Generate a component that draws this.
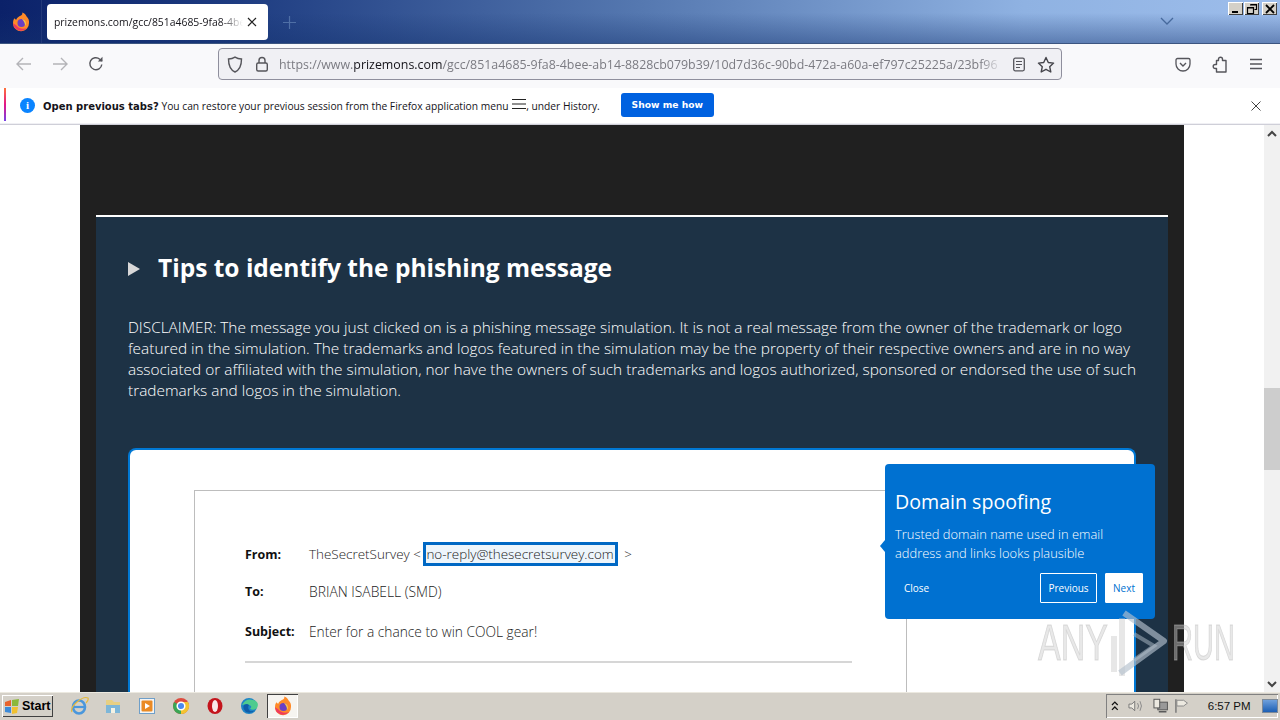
<div class="screen">
  <header class="tabbar">
    <div class="fx-btn">
      <svg width="20" height="20" viewBox="0 0 20 20"><path d="M10 3.500c1-.5 1.500-1.500 1.300-3 2.500 1 3.700 2.500 4.300 4 2 2 2.700 4 2.400 6.500a8 8 0 0 1-16 .5C2 9 2.500 7.500 3.500 6.300 4 7 4.500 7.500 5.200 7.700 6 5.700 7.700 4.300 10 3.500z" fill="#ff8a28"/><path d="M2 11a8 8 0 0 0 14 5c-3 1.500-8 1-10.500-2.500C4 12.500 3 12 2 11z" fill="#ef3a5d"/><circle cx="10.500" cy="11" r="4" fill="#6a3fc4"/><path d="M11 7c2.500.5 4 2 4 4.500 0 1-.5 2-1.200 2.600.6-2.600-.8-4.800-2.800-7.100z" fill="#ffc940"/></svg>
    </div>
    <div class="tab">
      <span class="tab-title">prizemons.com/gcc/851a4685-9fa8-4bee-ab14</span>
      <svg class="tab-x" width="10" height="10" viewBox="0 0 10 10"><path d="M1 1l8 8M9 1l-8 8" stroke="#222" stroke-width="1.200"/></svg>
    </div>
    <svg class="newtab" width="13" height="13" viewBox="0 0 13 13"><path d="M6.500 0v13M0 6.500h13" stroke="#4f6fa6" stroke-width="1.200"/></svg>
    <div class="spacer"></div>
    <svg class="chev" width="14" height="8" viewBox="0 0 14 8"><path d="M1 1l6 6 6-6" fill="none" stroke="#46699c" stroke-width="1.300"/></svg>
    <div class="winbtns">
      <span class="winbtn"><svg width="12" height="12" viewBox="0 0 12 12"><rect x="2" y="8" width="6" height="2" fill="#000"/></svg></span>
      <span class="winbtn wb-mid"><svg width="12" height="12" viewBox="0 0 12 12"><path d="M4.500 1.500h6v5h-2M1.500 4.500h6v6h-6z" fill="none" stroke="#000" stroke-width="1.200"/><path d="M4 2h7M1 5h7" stroke="#000" stroke-width="1.200"/></svg></span>
      <span class="winbtn"><svg width="12" height="12" viewBox="0 0 12 12"><path d="M2 2l8 8M10 2l-8 8" stroke="#000" stroke-width="1.800"/></svg></span>
    </div>
  </header>

  <nav class="navbar">
    <svg class="nav-ic first" width="18" height="16" viewBox="0 0 18 16"><path d="M16 8H2M8 2L2 8l6 6" fill="none" stroke="#b4b4b8" stroke-width="1.400"/></svg>
    <svg class="nav-ic" width="18" height="16" viewBox="0 0 18 16"><path d="M2 8h14M10 2l6 6-6 6" fill="none" stroke="#b4b4b8" stroke-width="1.400"/></svg>
    <svg class="nav-ic" width="18" height="18" viewBox="0 0 18 18"><path d="M14.800 9.500A6 6 0 1 1 12.800 4.200L15 6" fill="none" stroke="#55555b" stroke-width="1.400"/><path d="M15.500 1.800V6.500H10.800z" fill="#55555b"/></svg>
    <div class="urlbar">
      <svg width="16" height="17" viewBox="0 0 16 17"><path d="M8 1.200C6 2.500 4 3 1.500 3c0 6 1 10.500 6.500 13 5.500-2.500 6.500-7 6.500-13C12 3 10 2.500 8 1.200z" fill="none" stroke="#55555b" stroke-width="1.400"/></svg>
      <svg class="lock" width="14" height="16" viewBox="0 0 14 16"><rect x="1.700" y="7" width="10.600" height="8" rx="1.500" fill="none" stroke="#55555b" stroke-width="1.400"/><path d="M4 7V4.500a3 3 0 0 1 6 0V7" fill="none" stroke="#55555b" stroke-width="1.400"/></svg>
      <div class="url"><span class="dim">https://www.</span><span class="dark">prizemons.com</span><span class="dim">/gcc/851a4685-9fa8-4bee-ab14-8828cb079b39/10d7d36c-90bd-472a-a60a-ef797c25225a/23bf96</span></div>
      <svg class="reader" width="14" height="15" viewBox="0 0 14 15"><rect x="1.700" y="1.200" width="10.600" height="12.600" rx="1.500" fill="none" stroke="#55555b" stroke-width="1.300"/><path d="M4 4.500h6M4 7.500h6M4 10.500h4" stroke="#55555b" stroke-width="1.200"/></svg>
      <svg class="star" width="18" height="17" viewBox="0 0 18 17"><path d="M9 1.500l2.300 5 5.300.6-3.900 3.600 1.100 5.300L9 13.300 4.200 16l1.100-5.300L1.400 7.100l5.300-.6z" fill="none" stroke="#45454b" stroke-width="1.400" stroke-linejoin="round"/></svg>
    </div>
    <div class="nav-right">
      <svg width="16" height="15" viewBox="0 0 16 15"><path d="M2.500 1.500h11a1.500 1.500 0 0 1 1.500 1.500v4a7 7 0 0 1-14 0V3a1.500 1.500 0 0 1 1.500-1.500z" fill="none" stroke="#55555b" stroke-width="1.300"/><path d="M5 6l3 3 3-3" fill="none" stroke="#55555b" stroke-width="1.400"/></svg>
      <svg width="16" height="17" viewBox="0 0 16 17"><path d="M6.500 4.500V3.200a2 2 0 0 1 4 0V4.500h3.500v11.500H4.500v-3.500H3.200a2 2 0 0 1 0-4H4.500V4.500z" fill="none" stroke="#55555b" stroke-width="1.400" stroke-linejoin="round"/></svg>
      <svg width="14" height="12" viewBox="0 0 14 12"><path d="M1 1.500h12M1 6h12M1 10.500h12" stroke="#55555b" stroke-width="1.300"/></svg>
    </div>
  </nav>

  <aside class="infobar">
    <span class="stripe"></span>
    <span class="info-dot">i</span>
    <p class="info-text"><b>Open previous tabs?</b> You can restore your previous session from the Firefox application menu <svg class="menu-ic" width="14" height="12" viewBox="0 0 14 12"><path d="M0 1.500h14M0 6h14M0 10.500h14" stroke="#222" stroke-width="1.200"/></svg>, under History.</p>
    <button class="show">Show me how</button>
    <div class="spacer"></div>
    <svg class="info-x" width="10" height="10" viewBox="0 0 10 10"><path d="M.5.5l9 9M9.500.5l-9 9" stroke="#444" stroke-width="1"/></svg>
  </aside>

  <main class="viewport">
    <div class="page">
      <div class="dark-wrap">
        <section class="panel">
          <h1 class="tips"><span class="tri"></span>Tips to identify the phishing message</h1>
          <p class="disclaimer">DISCLAIMER: The message you just clicked on is a phishing message simulation. It is not a real message from the owner of the trademark or logo featured in the simulation. The trademarks and logos featured in the simulation may be the property of their respective owners and are in no way associated or affiliated with the simulation, nor have the owners of such trademarks and logos authorized, sponsored or endorsed the use of such trademarks and logos in the simulation.</p>
          <div class="card">
            <div class="mail">
              <div class="row r-from"><b>From:</b><span>TheSecretSurvey &lt; <em class="hl">no-reply@thesecretsurvey.com</em> &gt;</span></div>
              <div class="row r-to"><b>To:</b><span>BRIAN ISABELL (SMD)</span></div>
              <div class="row r-sub"><b>Subject:</b><span>Enter for a chance to win COOL gear!</span></div>
              <hr />
            </div>
            <div class="tip">
              <span class="tip-arrow"></span>
              <h2>Domain spoofing</h2>
              <p>Trusted domain name used in email address and links looks plausible</p>
              <div class="tip-actions">
                <span class="tip-close">Close</span>
                <div class="spacer"></div>
                <span class="tip-btn prev">Previous</span>
                <span class="tip-btn solid">Next</span>
              </div>
            </div>
          </div>
        </section>
      </div>
    </div>
    <div class="scrollbar">
      <span class="sb-arrow"><svg width="10" height="7" viewBox="0 0 10 7"><path d="M1 6l4-4 4 4" fill="none" stroke="#444" stroke-width="2"/></svg></span>
      <span class="thumb"></span>
      <span class="sb-arrow bottom"><svg width="10" height="7" viewBox="0 0 10 7"><path d="M1 1l4 4 4-4" fill="none" stroke="#444" stroke-width="2"/></svg></span>
    </div>
    <div class="watermark">
      <span class="wm-text any">ANY</span>
      <svg class="wm-logo" width="60" height="66" viewBox="0 0 60 66"><path d="M4 26V62M12 8V66" stroke="#c4c4c4" stroke-width="6" opacity=".4"/><path d="M14 3L54 31 10 63" fill="none" stroke="#b4c0cc" stroke-width="6" opacity=".65" stroke-linejoin="round"/><path d="M24 24L44 36 24 50" fill="none" stroke="#b4c0cc" stroke-width="4" opacity=".5"/></svg>
      <span class="wm-text run">RUN</span>
    </div>
  </main>

  <footer class="taskbar">
    <div class="start">
      <svg width="16" height="15" viewBox="0 0 16 15"><path d="M1 3l6-2v6H1z" fill="#e8632c"/><path d="M8 1l7-1-1 7H8z" fill="#8bb83a"/><path d="M1 8h6v6l-6-1z" fill="#3c8ad8"/><path d="M8 8h6l-1 6-5 1z" fill="#f0c030"/></svg>
      <b>Start</b>
    </div>
    <div class="quick">
      <span class="q"><svg width="20" height="20" viewBox="0 0 20 20"><ellipse cx="10" cy="11" rx="6" ry="6.500" fill="none" stroke="#4a97dc" stroke-width="2.600"/><path d="M4 11h12" stroke="#4a97dc" stroke-width="2.200"/><path d="M3 16Q1 12 8 6t11-4q1 2-2 5" fill="none" stroke="#e5b93a" stroke-width="1.200"/></svg></span>
      <span class="q"><svg width="18" height="18" viewBox="0 0 18 18"><path d="M2 3h6l2 2h6v11H2z" fill="#e7cf82"/><rect x="2" y="8" width="14" height="8" fill="#7db6d8"/><rect x="7" y="11" width="4" height="5" fill="#f4f2e4"/></svg></span>
      <span class="q"><svg width="18" height="18" viewBox="0 0 18 18"><rect x="1.500" y="1.500" width="15" height="15" fill="#f5f5f5" stroke="#6f9fc9"/><rect x="3.500" y="3.500" width="11" height="11" rx="1" fill="#ea8a24"/><path d="M7 6l5 3-5 3z" fill="#fff"/></svg></span>
      <span class="q"><svg width="18" height="18" viewBox="0 0 18 18"><circle cx="9" cy="9" r="8" fill="#dd4b3e"/><path d="M9 9L2.100 5A8 8 0 0 0 9 17z" fill="#3aa655"/><path d="M9 9v8A8 8 0 0 0 16 5H9z" fill="#f4c430"/><circle cx="9" cy="9" r="3.800" fill="#4a8af0" stroke="#fff" stroke-width="1.500"/></svg></span>
      <span class="q"><svg width="18" height="18" viewBox="0 0 18 18"><ellipse cx="9" cy="9" rx="7.500" ry="8" fill="#c4141c"/><ellipse cx="9" cy="9" rx="3" ry="6" fill="#f8e8e8"/></svg></span>
      <span class="q"><svg width="18" height="18" viewBox="0 0 18 18"><circle cx="9" cy="9" r="8" fill="#1d84c7"/><path d="M2 8Q6 1 13 3t4 8q-3 3-7 1 3-3-1-4-5-1-7 0z" fill="#4ecb8f"/><path d="M6 15q-4-4-2-7 3-2 5 0-2 3 1 6 2 1 5-1-3 4-9 2z" fill="#0f5ca8"/></svg></span>
      <span class="q active"><svg width="20" height="20" viewBox="0 0 20 20"><path d="M10 3.500c1-.5 1.500-1.500 1.300-3 2.500 1 3.700 2.500 4.300 4 2 2 2.700 4 2.400 6.500a8 8 0 0 1-16 .5C2 9 2.500 7.500 3.500 6.300 4 7 4.500 7.500 5.200 7.700 6 5.700 7.700 4.300 10 3.500z" fill="#ff8a28"/><path d="M2 11a8 8 0 0 0 14 5c-3 1.500-8 1-10.500-2.500C4 12.500 3 12 2 11z" fill="#ef3a5d"/><circle cx="10.500" cy="11" r="4" fill="#6a3fc4"/><path d="M11 7c2.500.5 4 2 4 4.500 0 1-.5 2-1.200 2.600.6-2.600-.8-4.800-2.800-7.100z" fill="#ffc940"/></svg></span>
    </div>
    <div class="spacer"></div>
    <div class="tray">
      <svg width="8" height="10" viewBox="0 0 8 10"><path d="M1 4l3-3 3 3M1 9l3-3 3 3" fill="none" stroke="#111" stroke-width="1.300"/></svg>
      <svg class="t-sound" width="16" height="14" viewBox="0 0 16 14"><path d="M1 5h3l3-3v10l-3-3H1z" fill="#ece9e0" stroke="#777"/><path d="M10 4q2 3 0 6M12.500 2q3 5 0 10" fill="none" stroke="#888"/></svg>
      <svg class="t-net" width="16" height="16" viewBox="0 0 16 16"><rect x="5" y="4" width="10" height="8" fill="#999" stroke="#555"/><rect x="1" y="1" width="6" height="9" fill="#ece9e0" stroke="#555"/><path d="M6 14h8" stroke="#555" stroke-width="1.500"/></svg>
      <svg class="t-flag" width="16" height="16" viewBox="0 0 16 16"><path d="M2 1v14" stroke="#777" stroke-width="1.500"/><path d="M3 2h7l4 3-4 3H3z" fill="#ece9e0" stroke="#888"/></svg>
      <span class="clock">6:57 PM</span>
      <span class="desk"></span>
    </div>
  </footer>
</div>

<style>
  :global(body) { margin: 0; }
  .screen {
    width: 1280px; height: 720px; overflow: hidden;
    display: flex; flex-direction: column;
    font-family: "Open Sans", "Liberation Sans", sans-serif;
    background: #fff;
  }
  .spacer { flex: 1; }

  .tabbar {
    height: 44px; flex: none; display: flex; align-items: flex-start;
    background:
      linear-gradient(180deg, rgba(20,50,110,0) 30%, rgba(20,50,110,.42) 100%),
      linear-gradient(90deg, #0b2169 0%, #1d3b80 18%, #5578b0 50%, #8fb2e2 80%, #9dbdeb 100%);
    border-bottom: 1px solid #3c5580;
    box-sizing: border-box;
  }
  .fx-btn { width: 42px; height: 43px; display: flex; align-items: center; justify-content: center; border-right: 1px solid #22397a; box-sizing: border-box; }
  .tab {
    margin: 4px 0 0 5px; width: 221px; height: 36px; background: #fff; border-radius: 4px;
    display: flex; align-items: center; padding: 0 11px 0 7px; box-sizing: border-box;
  }
  .tab-title {
    flex: 1; min-width: 0; font-size: 10.400px; white-space: nowrap; overflow: hidden; color: #15141a;
    -webkit-mask-image: linear-gradient(90deg, #000 88%, transparent 100%);
    mask-image: linear-gradient(90deg, #000 88%, transparent 100%);
  }
  .tab-x { margin-left: 4px; }
  .newtab { margin: 16px 0 0 15px; }
  .chev { margin: 17px 54px 0 0; }
  .winbtns { display: flex; margin: 2px 3px 0 0; }
  .winbtn {
    width: 15px; height: 13px; background: #d4d0c8; display: flex; align-items: center; justify-content: center;
    box-shadow: inset 1px 1px 0 #fff, inset -1px -1px 0 #404040;
  }
  .wb-mid { margin: 0 3px 0 1px; }

  .navbar { height: 44px; flex: none; background: #f9f9fb; display: flex; align-items: center; padding-bottom: 4px; box-sizing: border-box; }
  .nav-ic { margin-left: 18px; }
  .nav-ic.first { margin-left: 15px; }
  .urlbar {
    margin-left: 113px; width: 844px; height: 32px; box-sizing: border-box;
    background: #f0f0f4; border: 1px solid #8f8f9d; border-radius: 4px;
    display: flex; align-items: center; padding: 0 6px 0 8px;
  }
  .lock { margin-left: 12px; }
  .url {
    margin-left: 10px; flex: 1; min-width: 0; white-space: nowrap; overflow: hidden; font-size: 12.400px;
    -webkit-mask-image: linear-gradient(90deg, #000 97%, transparent 100%);
    mask-image: linear-gradient(90deg, #000 97%, transparent 100%);
  }
  .dim { color: #7b7b82; }
  .dark { color: #15141a; }
  .reader { margin-left: 10px; }
  .star { margin-left: 11px; }
  .nav-right { margin-left: auto; display: flex; align-items: center; gap: 21px; padding-right: 17px; }

  .infobar {
    height: 37px; flex: none; background: #fff; display: flex; align-items: center; position: relative;
    border-bottom: 1px solid #cfcfd8; box-sizing: border-box;
    box-shadow: inset 0 -1px 0 #f0f0f4; padding-left: 20px; padding-bottom: 1px;
  }
  .stripe { position: absolute; left: 4px; top: 0; bottom: 3px; width: 2px; background: linear-gradient(180deg, #ff7139, #e31587 50%, #7542e5); }
  .info-dot {
    width: 15px; height: 15px; border-radius: 50%; background: #0a84ff; color: #fff; font: 700 11px/15px "Liberation Serif", serif;
    text-align: center; margin-top: -1px;
  }
  .info-text { margin: 0 0 0 8px; font-size: 10.250px; color: #15141a; white-space: nowrap; }
  .info-text b { font-family: "DejaVu Sans", sans-serif; font-size: 10px; }
  .menu-ic { vertical-align: 0; margin: 0 0 0 1px; }
  .show {
    margin: -2px 0 0 21px; width: 93px; height: 24px; border: 0; border-radius: 3px; background: #0061e0; color: #fff;
    font: 700 9.200px "DejaVu Sans", sans-serif; padding: 0;
  }
  .info-x { margin-right: 19px; }

  .viewport { flex: 1; min-height: 0; display: flex; position: relative; overflow: hidden; }
  .page { flex: 1; min-width: 0; background: #fff; padding: 0 80px; box-sizing: border-box; overflow: hidden; }
  .dark-wrap { background: #202020; padding: 90px 16px 0; height: 100%; box-sizing: border-box; }
  .panel { background: #1d3245; border-top: 2px solid #fff; height: 100%; box-sizing: border-box; padding: 0 32px; overflow: hidden; }
  .tips { margin: 33px 0 0; display: flex; align-items: center; color: #fff; font-size: 24.500px; font-weight: 700; line-height: 36px; }
  .tri { width: 0; height: 0; border-left: 12px solid #d8d8d8; border-top: 7px solid transparent; border-bottom: 7px solid transparent; margin: 2px 18px 0 0; }
  .disclaimer { margin: 31px 0 0; color: #fff; font-size: 15.400px; line-height: 21px; font-weight: 300; width: 1010px; }
  .card {
    margin-top: 47px; width: 1008px; box-sizing: border-box; height: 300px; position: relative;
    background: #fff; border: 2px solid #0078d4; border-bottom: 0; border-radius: 8px 8px 0 0; padding: 40px 0 0 64px;
  }
  .mail { width: 713px; height: 240px; box-sizing: border-box; border: 1px solid #bdbdbd; padding: 45px 54px 0 50px; font-size: 13.450px; color: #333; }
  .row { display: flex; align-items: center; }
  .row b { width: 64px; flex: none; color: #111; font-weight: 700; font-size: 12.500px; }
  .r-from { height: 36px; }
  .r-to { height: 38px; font-size: 13.850px; }
  .r-sub { height: 42px; font-size: 13.750px; }
  .row span { font-weight: 300; color: #1a1a1a; }
  .hl { font-style: normal; border: 3px solid #0068c4; background: #edf5fb; padding: 0 1px 0 0; margin: 0 3px 0 -1px; display: inline-block; line-height: 18px; }
  hr { border: 0; border-top: 2px solid #d6d6d6; margin: 9px 0 0; }

  .tip {
    position: absolute; left: 755px; top: 14px; width: 270px; height: 155px; box-sizing: border-box;
    background: #0071d1; color: #fff; border-radius: 4px; padding: 24px 12px 0 10px;
    z-index: 2;
  }
  .tip-arrow { position: absolute; left: -5px; top: 76px; border-right: 5px solid #0071d1; border-top: 6px solid transparent; border-bottom: 6px solid transparent; }
  .tip h2 { margin: 0; font-size: 19.600px; line-height: 28px; font-weight: 400; }
  .tip p { margin: 9px 0 0; font-size: 12.900px; line-height: 19px; font-weight: 300; width: 235px; }
  .tip-actions { display: flex; align-items: center; margin-top: 10px; gap: 8px; font-size: 10px; }
  .tip-close { margin-left: 9px; }
  .tip-btn { height: 30px; line-height: 28px; box-sizing: border-box; border: 1px solid #fff; border-radius: 1px; text-align: center; width: 38px; }
  .tip-btn.prev { width: 57px; }
  .tip-btn.solid { background: #fff; color: #0071d1; }

  .scrollbar { width: 16px; flex: none; background: #f1f1f1; position: relative; display: flex; flex-direction: column; align-items: center; justify-content: space-between; }
  .sb-arrow { height: 16px; display: flex; align-items: center; }
  .thumb { position: absolute; top: 263px; left: 0; width: 16px; height: 82px; background: #cdcdcd; }

  .watermark {
    position: absolute; left: 1038px; top: 485px; width: 200px; height: 66px; display: flex; align-items: center;
    pointer-events: none; z-index: 3;
  }
  .wm-text {
    flex: none; display: inline-block; transform-origin: left center; transform: scaleX(.68);
    font: 400 50px/66px "Liberation Sans", sans-serif; color: rgba(205,205,205,.45);
    -webkit-text-stroke: 1px rgba(190,190,190,.5); width: 67px;
  }
  .wm-logo { flex: none; margin-left: 5px; }
  .run { margin-left: 2px; transform: scaleX(.58); width: 60px; }

  .taskbar {
    height: 28px; flex: none; background: #d4d0c8; display: flex; align-items: center; box-sizing: border-box;
    box-shadow: inset 0 1px 0 #ece9e0;
  }
  .start {
    margin-left: 2px; width: 51px; height: 22px; box-sizing: border-box; display: flex; align-items: center; gap: 2px; padding-left: 2px;
    box-shadow: inset 1px 1px 0 #fff, inset -1px -1px 0 #404040; font: 700 12.500px "Liberation Sans", sans-serif; color: #000;
  }
  .quick { display: flex; margin-left: 14px; gap: 10px; align-items: center; }
  .q { width: 24px; height: 24px; display: flex; align-items: center; justify-content: center; }
  .q.active { width: 31px; background: #f6f4f0; box-shadow: inset 1px 1px 0 #404040, inset -1px -1px 0 #fff; margin-left: -4px; }
  .tray {
    width: 172px; height: 24px; margin-right: 2px; box-sizing: border-box; display: flex; align-items: center;
    box-shadow: inset 1px 1px 0 #808080, inset -1px -1px 0 #fff; padding: 0 0 0 5px;
  }
  .t-sound { margin-left: 9px; }
  .t-net { margin-left: 10px; }
  .t-flag { margin-left: 6px; }
  .clock { margin-left: 18px; font: 11.500px "Liberation Sans", sans-serif; color: #111; white-space: nowrap; }
  .desk { width: 15px; height: 12px; margin-left: 11px; background: linear-gradient(180deg, #6fa0dc, #1c5fb4); border: 1px solid #7d8a99; }
</style>
